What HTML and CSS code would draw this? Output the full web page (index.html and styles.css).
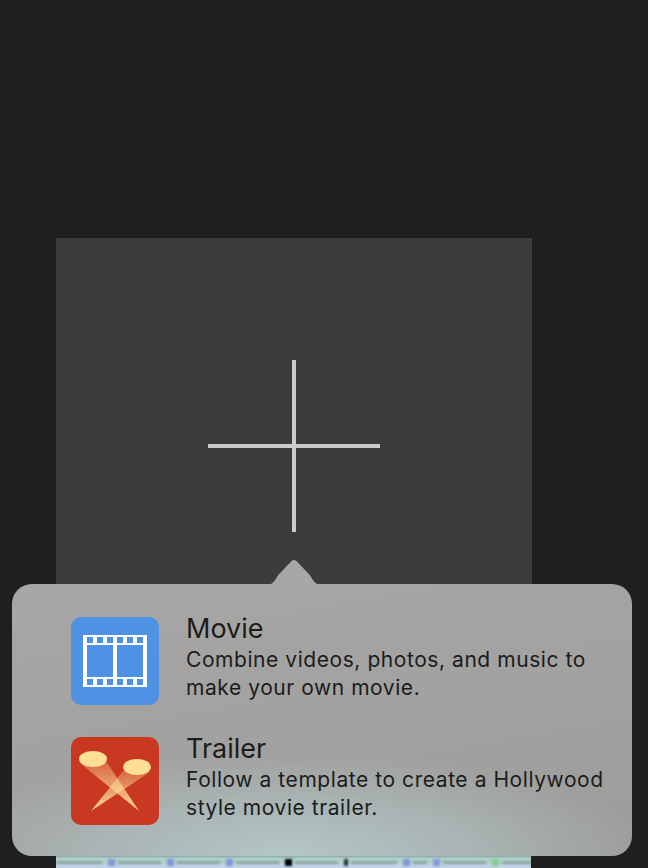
FILE: index.html
```html
<!DOCTYPE html>
<html lang="en">
<head>
<meta charset="utf-8">
<title>New project</title>
<link rel="stylesheet" href="styles.css">
</head>
<body>
<main class="stage">
  <div class="panel">
    <div class="plus"></div>
    <div class="strip">
      <span class="tab tab-first"><i class="bar"></i></span>
      <span class="tab"><i class="dot"></i><i class="bar"></i></span>
      <span class="tab"><i class="dot"></i><i class="bar"></i></span>
      <span class="tab"><i class="dot"></i><i class="bar"></i></span>
      <span class="tab"><i class="dot dot-black"></i><i class="bar"></i></span>
      <span class="tab"><i class="dot dot-dark"></i><i class="bar"></i></span>
      <span class="tab tab-short"><i class="dot"></i><i class="bar"></i></span>
      <span class="tab"><i class="dot"></i><i class="bar"></i></span>
      <span class="tab"><i class="dot dot-green"></i><i class="bar"></i></span>
    </div>
  </div>
  <section class="popover">
    <svg class="arrow" width="60" height="25" viewBox="0 0 60 25"><path d="M0 25H3C9 25 11.500 19 14.300 15L27.500 1C29 -.2 31 -.2 32.500 1L45.700 15C48.500 19 51 25 57 25H60Z"/></svg>
    <article class="option">
      <svg class="icon" width="88" height="88" viewBox="0 0 88 88">
        <rect width="88" height="88" rx="10" fill="#4f91e3"/>
        <path fill="#fff" fill-rule="evenodd" d="M12 18H76V70H12ZM16 20V26H22V20ZM26 20V26H32V20ZM36 20V26H42V20ZM46 20V26H52V20ZM56 20V26H62V20ZM66 20V26H72V20ZM16 28V60H42V28ZM46 28V60H72V28ZM16 62V68H22V62ZM26 62V68H32V62ZM36 62V68H42V62ZM46 62V68H52V62ZM56 62V68H62V62ZM66 62V68H72V62Z"/>
      </svg>
      <div class="copy">
        <h2>Movie</h2>
        <p>Combine videos, photos, and music to<br>make your own movie.</p>
      </div>
    </article>
    <article class="option">
      <svg class="icon" width="88" height="88" viewBox="0 0 88 88">
        <defs>
          <linearGradient id="beam" x1="0" y1="0" x2="0" y2="1"><stop offset="0" stop-color="#fde09a" stop-opacity=".28"/><stop offset="1" stop-color="#fde09a" stop-opacity=".95"/></linearGradient>
        </defs>
        <rect width="88" height="88" rx="10" fill="#c93820"/>
        <path fill="url(#beam)" d="M10 27L35 24L68 74Z"/>
        <path fill="url(#beam)" d="M52 34L79 35L20 74Z"/>
        <ellipse cx="22" cy="22" rx="14" ry="8" fill="#fde096"/>
        <ellipse cx="66" cy="30" rx="14" ry="8" fill="#fde096"/>
      </svg>
      <div class="copy">
        <h2>Trailer</h2>
        <p>Follow a template to create a Hollywood<br>style movie trailer.</p>
      </div>
    </article>
  </section>
</main>
</body>
</html>
```

FILE: styles.css
```css
html, body {
  margin: 0;
  height: 100%;
  background: #1f1f1f;
  overflow: hidden;
}
.stage {
  position: relative;
  width: 648px;
  height: 868px;
  font-family: Inter, "Noto Sans", sans-serif;
}
.panel {
  position: absolute;
  left: 56px;
  top: 238px;
  width: 476px;
  height: 618px;
  background: #3c3c3c;
}
.plus {
  position: absolute;
  left: 152px;
  top: 122px;
  width: 172px;
  height: 172px;
  background:
    linear-gradient(#cbcbcb, #cbcbcb) center / 4px 100% no-repeat,
    linear-gradient(#cbcbcb, #cbcbcb) center / 100% 4px no-repeat;
}
.strip {
  position: absolute;
  left: 0;
  top: 618px;
  width: 475px;
  height: 12px;
  overflow: hidden;
  display: flex;
  align-items: flex-start;
  gap: 6px;
  padding-top: 2px;
  box-sizing: border-box;
  background: linear-gradient(#8fb0ae 0 1px, #b2d0ca 2px 7px, #c0d2e6 9px);
}
.tab {
  flex: none;
  display: flex;
  align-items: center;
  gap: 3px;
  width: 53px;
  height: 8px;
  filter: blur(1px);
}
.tab-first {
  width: 46px;
}
.tab-short {
  width: 24px;
}
.dot {
  flex: none;
  width: 7px;
  height: 7px;
  background: #7f9bdc;
}
.dot-black {
  background: #000;
}
.dot-dark {
  width: 4px;
  background: #2b3a3a;
}
.dot-green {
  background: #86cf8e;
}
.bar {
  flex: 1;
  height: 3px;
  background: #8ea5a2;
}
.popover {
  position: absolute;
  left: 12px;
  top: 584px;
  box-sizing: border-box;
  width: 620px;
  height: 272px;
  padding: 33px 24px 0 59px;
  display: flex;
  flex-direction: column;
  gap: 32px;
  border-radius: 20px;
  color: #1c1c1c;
  background:
    radial-gradient(ellipse 370px 105px at 44% 100%, #b4c6c6 0%, rgba(174, 190, 190, .7) 50%, rgba(160, 160, 158, 0) 100%),
    linear-gradient(170deg, #a8a7a5 0%, #9c9c9a 100%);
}
.arrow {
  position: absolute;
  left: 252px;
  top: -24px;
  fill: #a8a7a5;
}
.option {
  display: flex;
  gap: 27px;
  height: 88px;
}
.icon {
  flex: none;
}
.copy {
  margin-top: -3px;
}
h2 {
  margin: 0;
  font-size: 27px;
  font-weight: 400;
  line-height: 30px;
}
p {
  margin: 2px 0 0;
  font-size: 21px;
  line-height: 28px;
  letter-spacing: .56px;
}
```
